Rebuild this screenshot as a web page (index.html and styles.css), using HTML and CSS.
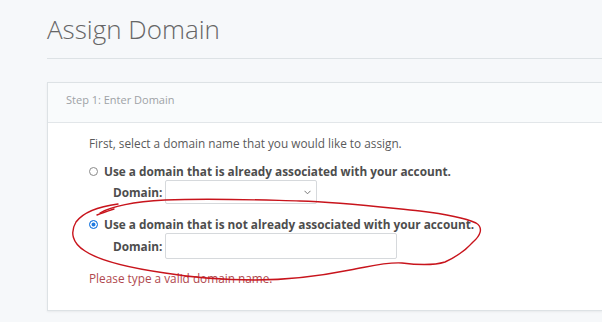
FILE: index.html
```html
<!DOCTYPE html>
<html lang="en">
<head>
<meta charset="utf-8">
<title>Assign Domain</title>
<link rel="stylesheet" href="styles.css">
</head>
<body>
<div class="page">
  <h1 class="title">Assign Domain</h1>
  <section class="card">
    <div class="card-header">Step 1: Enter Domain</div>
    <div class="card-body">
      <p class="intro">First, select a domain name that you would like to assign.</p>
      <label class="option">
        <input type="radio" name="mode" class="radio">
        <span>Use a domain that is already associated with your account.</span>
      </label>
      <div class="field">
        <span class="field-label">Domain:</span>
        <div class="select-wrap">
          <select class="select"><option></option></select>
          <svg class="chevron" width="7" height="5" viewBox="0 0 7 5"><path d="M0.5 0.8 L3.5 3.8 L6.5 0.8" fill="none" stroke="#777" stroke-width="1"/></svg>
        </div>
      </div>
      <label class="option option-second">
        <input type="radio" name="mode" class="radio" checked>
        <span>Use a domain that is not already associated with your account.</span>
      </label>
      <div class="field">
        <span class="field-label">Domain:</span>
        <input type="text" class="text-input">
      </div>
      <p class="error">Please type a valid domain name.</p>
    </div>
  </section>
</div>
<svg class="scribble" width="602" height="322" viewBox="0 0 602 322">
  <path d="M114 209 C108 211 102 213 97 215" fill="none" stroke="#c8141c" stroke-width="1.4" stroke-linecap="round"/>
  <path d="M100 213 C112 206 130 202 165 200 C215 198 260 200 300 201 C340 202 380 207 420 211 C445 214 465 218 476 223 C484 228 480 236 473 242 C466 250 458 256 445 262 C432 266 418 265 402 263 C385 262 372 266 350 270 C320 276 290 280 255 280 C225 280 195 278 165 273 C130 268 100 261 85 251 C72 243 70 232 76 222 C82 214 95 207 118 204" fill="none" stroke="#c8141c" stroke-width="1.4" stroke-linecap="round"/>
</svg>
</body>
</html>
```

FILE: styles.css
```css
html, body {
  margin: 0;
  padding: 0;
  overflow: hidden;
  background: #f6f8fa;
}
body {
  font-family: "Open Sans", "Liberation Sans", sans-serif;
  color: #555;
  position: relative;
  width: 602px;
  height: 322px;
}
.page {
  padding: 14px 0 0 47px;
  width: 556px;
}
.title {
  margin: 0;
  font-size: 26px;
  font-weight: 300;
  line-height: 31px;
  color: #666;
  padding-bottom: 13px;
  border-bottom: 1px solid #dde2e5;
}
.card {
  margin-top: 23px;
  border: 1px solid #dde2e5;
  background: #fff;
  box-shadow: 0 1px 2px rgba(0,0,0,0.06);
}
.card-header {
  background: #f9fbfc;
  border-bottom: 1px solid #e2e6e9;
  padding: 8px 18px 14px;
  font-size: 11px;
  line-height: 17px;
  color: #9ea2a6;
}
.card-body {
  padding: 11px 41px 23px;
  font-size: 11.8px;
  line-height: 18px;
}
.intro {
  margin: 0 0 10px;
  color: #5a5a5a;
}
.option {
  display: flex;
  align-items: center;
  font-weight: 700;
  color: #4d4d4d;
}
.option-second {
  margin-top: 11px;
}
.radio {
  appearance: none;
  -webkit-appearance: none;
  width: 9px;
  height: 9px;
  margin: 0 6px 0 0;
  border: 1px solid #8a8a8a;
  border-radius: 50%;
  background: #fff;
  flex: none;
}
.radio:checked {
  border-color: #1f7ae0;
  background: #1f7ae0;
  box-shadow: inset 0 0 0 1.5px #fff;
}
.field {
  display: flex;
  align-items: center;
  padding-left: 24px;
}
.field-label {
  width: 52px;
  font-weight: 700;
  color: #4d4d4d;
}
.select-wrap {
  position: relative;
}
.select {
  appearance: none;
  -webkit-appearance: none;
  display: block;
  width: 152px;
  height: 24px;
  border: 1px solid #d6d9dc;
  border-radius: 2px;
  background: #fff;
  margin: 0;
}
.chevron {
  position: absolute;
  right: 6px;
  top: 10px;
}
.text-input {
  display: block;
  width: 232px;
  height: 26px;
  box-sizing: border-box;
  border: 1px solid #d6d9dc;
  border-radius: 2px;
  margin: 0;
  background: #fff;
}
.error {
  margin: 10px 0 0;
  color: #b0484d;
}
.scribble {
  position: absolute;
  left: 0;
  top: 0;
  pointer-events: none;
}
```
